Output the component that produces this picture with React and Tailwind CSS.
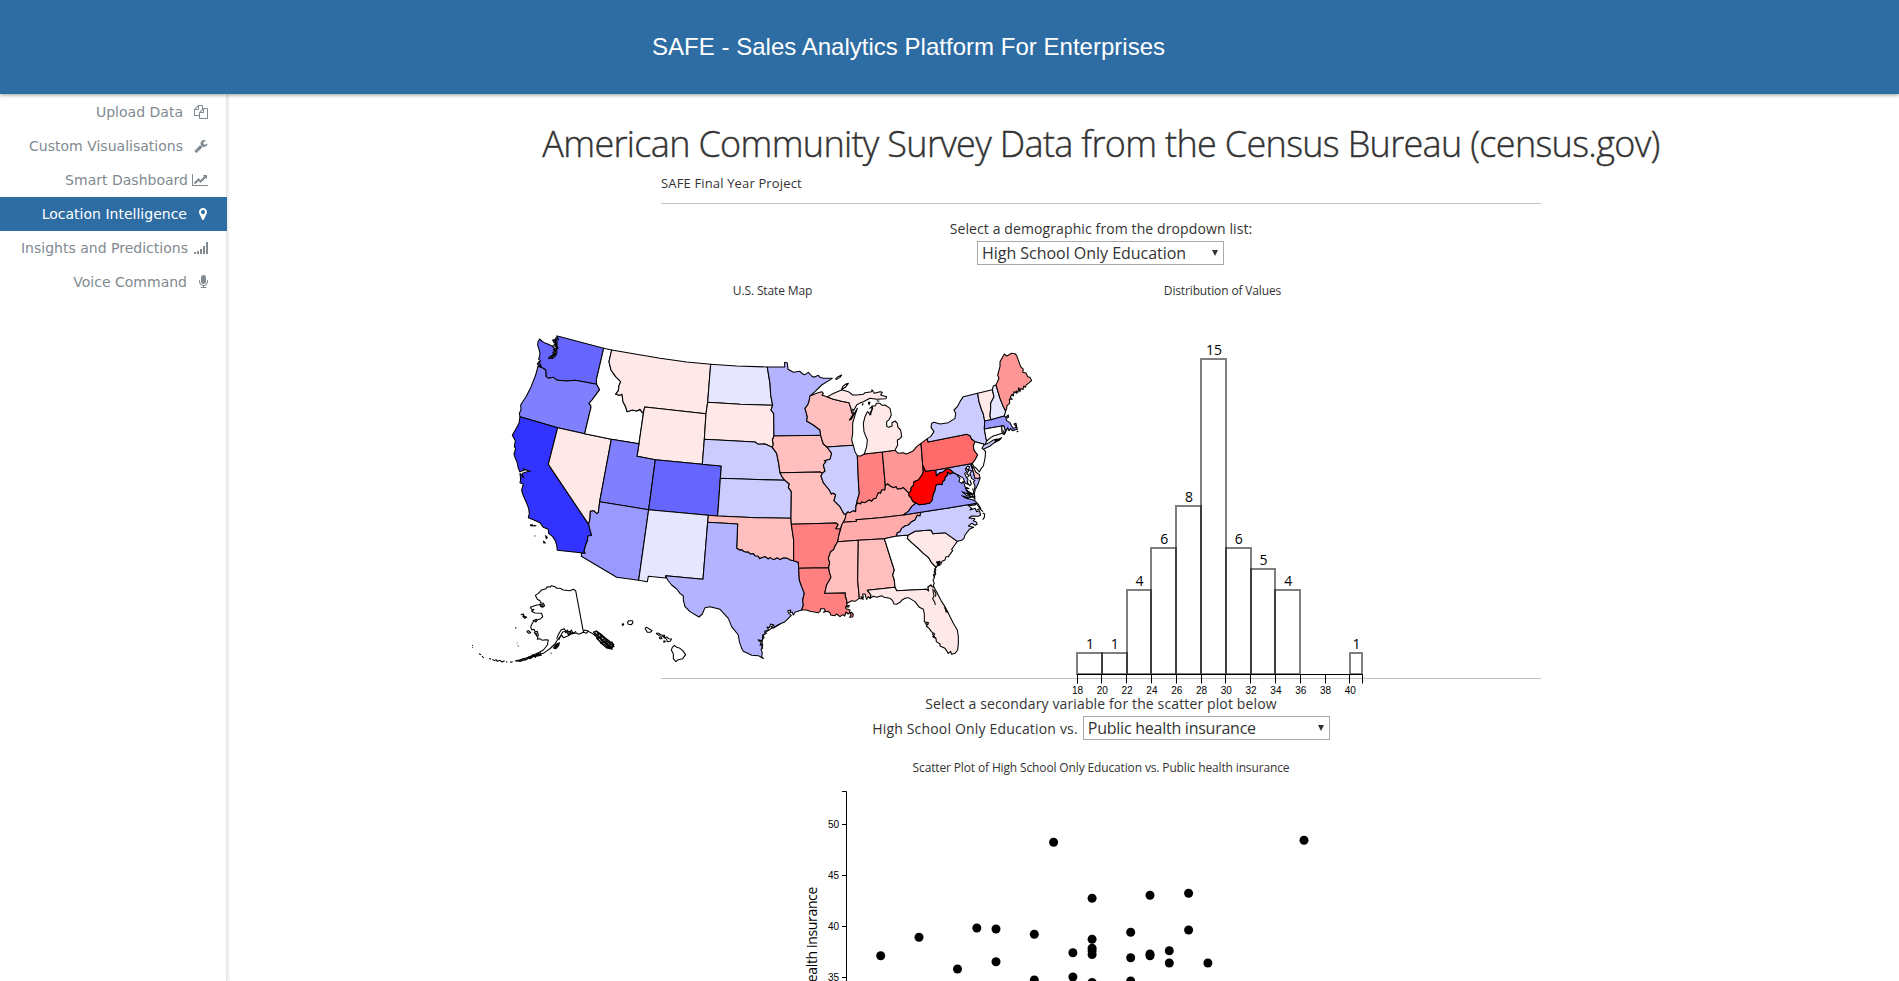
import React from 'react';

/* ---------- Sidebar ---------- */

const ICONS = {
  files: {
    box: '0 0 1792 1792',
    d: 'M1696 384q40 0 68 28t28 68v1216q0 40-28 68t-68 28h-960q-40 0-68-28t-28-68v-288h-544q-40 0-68-28t-28-68v-672q0-40 20-88t48-76l408-408q28-28 76-48t88-20h416q40 0 68 28t28 68v328q68-40 128-40h416zm-544 213l-299 299h299v-299zm-640-384l-299 299h299v-299zm196 647l316-316v-416h-384v416q0 40-28 68t-68 28h-416v640h512v-256q0-40 20-88t48-76zm956 804v-1152h-384v416q0 40-28 68t-68 28h-416v640h896z',
  },
  wrench: {
    box: '0 0 1792 1792',
    d: 'M448 1472q0-26-19-45t-45-19-45 19-19 45 19 45 45 19 45-19 19-45zm644-420l-682 682q-37 37-90 37-52 0-91-37l-106-108q-38-36-38-90 0-53 38-91l681-681q39 98 114.500 173.500t173.500 114.500zm634-435q0 39-23 106-47 134-164.500 217.500t-258.500 83.500q-185 0-316.500-131.500t-131.500-316.500 131.500-316.500 316.500-131.500q58 0 121.500 16.500t107.500 46.500q16 11 16 28t-16 28l-293 169v224l193 107q5-3 79-48.500t135.500-81 70.500-35.500q15 0 23.500 10t8.500 25z',
  },
  line: {
    box: '0 0 2048 1792',
    d: 'M2048 1536v128h-2048v-1536h128v1408h1920zm-128-1248v435q0 21-19.500 29.500t-35.500-7.500l-121-121-633 633q-10 10-23 10t-23-10l-233-233-416 416-192-192 585-585q10-10 23-10t23 10l233 233 464-464-121-121q-16-16-7.500-35.500t29.500-19.500h435q14 0 23 9t9 23z',
  },
  marker: {
    box: '384 0 1024 1792',
    d: 'M1152 640q0-106-75-181t-181-75-181 75-75 181 75 181 181 75 181-75 75-181zm256 0q0 109-33 179l-364 774q-16 33-47.500 52t-67.500 19-67.500-19-46.500-52l-365-774q-33-70-33-179 0-212 150-362t362-150 362 150 150 362z',
  },
  signal: {
    box: '0 0 1792 1792',
    d: 'M0 1408h256v256h-256zM384 1280h256v384h-256zM768 1024h256v640h-256zM1152 640h256v1024h-256zM1536 128h256v1536h-256z',
  },
  mic: {
    box: '320 0 1152 1792',
    d: 'M1472 704v128q0 221-147.500 384.500t-364.500 187.500v132h256q26 0 45 19t19 45-19 45-45 19h-640q-26 0-45-19t-19-45 19-45 45-19h256v-132q-217-24-364.500-187.500t-147.500-384.500v-128q0-26 19-45t45-19 45 19 19 45v128q0 185 131.500 316.500t316.500 131.500 316.500-131.500 131.500-316.500v-128q0-26 19-45t45-19 45 19 19 45zm-256-384v512q0 132-94 226t-226 94-226-94-94-226v-512q0-132 94-226t226-94 226 94 94 226z',
  },
};

const NAV = [
  { label: 'Upload Data', icon: 'files', w: 'w-[14px]', gap: 'gap-[11px]' },
  { label: 'Custom Visualisations', icon: 'wrench', w: 'w-[14px]', gap: 'gap-[11px]' },
  { label: 'Smart Dashboard', icon: 'line', w: 'w-[16px]', gap: 'gap-[4px]' },
  { label: 'Location Intelligence', icon: 'marker', w: 'w-[8px] mr-px', gap: 'gap-[12px]', active: true },
  { label: 'Insights and Predictions', icon: 'signal', w: 'w-[14px]', gap: 'gap-[6px]' },
  { label: 'Voice Command', icon: 'mic', w: 'w-[9px]', gap: 'gap-[12px]' },
];

function Sidebar() {
  return (
    <aside className="w-[227px] shrink-0 border-r border-[#e4e4e4] pt-px shadow-[1px_0_3px_rgba(0,0,0,0.12)]">
      <nav>
        {NAV.map((n) => (
          <a
            key={n.label}
            className={`flex h-[34px] items-center justify-end font-['DejaVu_Sans',sans-serif] text-[14px] ${n.gap} ${
              n.active ? '-mr-px bg-[#2e6da4] pr-[19px] text-white' : 'pr-[18px] text-[#818a91]'
            }`}
          >
            <span className="whitespace-nowrap tracking-[0.01px]">{n.label}</span>
            <svg viewBox={ICONS[n.icon].box} className={`h-[14px] ${n.w}`} fill="currentColor">
              <path d={ICONS[n.icon].d} />
            </svg>
          </a>
        ))}
      </nav>
    </aside>
  );
}

/* ---------- Map ---------- */

// Survey tiles: each tile has its own origin, borders are listed per tile.
const TILE = {
  B: [0, 0],
  C: [0, 450],
  D: [570, 60],
  E: [570, 510],
  F: [1080, 60],
  G: [1080, 510],
  H: [-120, 750],
};

// "B 1,2 3,4 C 5,6" -> [[x, y], ...]
function points(spec) {
  let o = TILE.B;
  const out = [];
  spec.trim().split(/\s+/).forEach((t) => {
    if (TILE[t]) o = TILE[t];
    else {
      const [x, y] = t.split(',').map(Number);
      out.push([x + o[0], y + o[1]]);
    }
  });
  return out;
}

const ARCS = {
  waCoast: 'B 114,139 122,137 112,133 116,126 122,122 116,118 118,110 120,100 117,88 113,76 114,66 119,57 125,63 133,68 145,73 157,79 160,76 159,82 164,84 160,90 166,92 158,97 162,102 154,108 147,112 146,116 154,113 158,115 168,105 171,96 169,88 175,84 168,80 171,74 163,74 169,68 161,66 158,60 166,62 168,53 176,60 170,48 175,49 311,85',
  waId: 'B 311,85 289,180 290,193',
  waOr: 'B 114,139 128,144 137,150 138,170 146,175 160,172 172,181 200,183 225,181 250,185 290,193',
  orId: 'B 290,193 299,209 290,221 276,240 267,250 272,256 273,263 269,278 254,341',
  orCoast: 'B 114,139 107,165 92,203 78,230 62,255 63,270 58,280 60,290',
  orCa: 'B 60,290 173,323',
  orNv: 'B 173,323 254,341',
  caCoast: 'B 60,290 57,310 46,330 37,346 46,362 43,380 47,385 42,402 45,412 51,426 55,445 59,455 75,450 70,446 85,452 92,453 78,456 68,460 66,470 72,472 60,460 C 60,10 62,30 60,38 70,42 65,60 68,72 78,95 86,115 88,130 85,143 100,149 120,158 130,172 145,178 146,190 158,200 166,212 170,225 172,241 256,250',
  caAz: 'C 256,250 252,243 257,225 263,210 263,199 275,196 270,180 266,163',
  caNv: 'C 266,163 B 145,433 173,323',
  nvAz: 'C 266,163 270,145 271,124 281,122 290,131 295,128 299,95',
  nvId: 'B 254,341 334,358',
  utId: 'B 334,358 417,371',
  nvUt: 'B 334,358 C 299,95',
  utAz: 'C 299,95 446,119',
  utWy: 'B 417,371 411,409 466,419',
  utCo: 'B 466,419 C 446,119',
  idN: 'B 311,85 335,90',
  idWy: 'B 417,371 431,275',
  idMt: 'B 335,90 327,125 333,150 347,170 362,185 357,197 355,212 347,223 358,226 366,223 369,245 377,260 381,275 397,270 410,273 420,268 427,278 431,275',
  mtWy: 'B 431,275 434,261 D 48,221',
  mtN: 'B 335,90 480,115 560,126 D 62,73',
  mtNd: 'D 62,73 53,187',
  mtSd: 'D 53,187 48,221',
  wySd: 'D 48,221 43,298',
  wyNe: 'D 43,298 37,373',
  wyCo: 'B 466,419 D 37,373',
  coNe: 'D 37,373 94,378 91,415',
  coKs: 'D 91,415 E 83,78',
  coOk: 'E 83,78 55,76',
  coNm: 'E 55,76 C 446,119',
  azNm: 'C 446,119 416,331',
  azMex: 'C 256,250 244,250 244,259 350,322 416,331',
  nmMex: 'C 416,331 442,335 445,319 497,324 497,317',
  nmOk: 'E 55,76 53,97',
  nmTx: 'E 53,97 39,268 C 497,317',
  ndN: 'D 62,73 140,78 232,81',
  ndMn: 'D 232,81 235,100 240,130 242,165 248,196',
  ndSd: 'D 53,187 150,193 248,196',
  sdMn: 'D 248,196 243,210 251,220 252,288',
  sdIa: 'D 252,288 247,300 250,312 247,322',
  sdNe: 'D 43,298 195,306 205,313 225,312 240,319 247,322',
  neIa: 'D 247,322 260,340 266,370 270,398',
  neMo: 'D 270,398 278,413 285,421',
  neKs: 'D 91,415 285,421',
  ksMo: 'D 285,421 298,432 295,442 304,455 E 303,85',
  ksOk: 'E 83,78 200,83 303,85',
  okMo: 'E 303,85 304,103',
  arMo: 'E 304,103 438,99 444,104 437,116 452,117',
  okAr: 'E 304,103 311,150 311,212',
  okTx: 'E 53,97 143,102 140,175 150,181 155,179 160,184 168,187 174,186 180,192 190,191 195,198 205,199 208,206 215,203 225,200 235,207 240,203 250,209 262,204 270,209 280,204 292,205 300,210 311,212',
  txAr: 'E 311,212 325,217 326,235',
  txLa: 'E 326,235 328,270 335,290 343,310 338,330 340,345 335,360',
  txCoast: 'E 335,360 315,367 310,375 306,366 300,368 302,360 293,362 296,370 304,376 285,395 270,402 250,414 243,410 252,405 242,402 238,413 231,411 236,420 224,424 229,430 219,436 222,442 215,452 205,449 207,453 214,456 210,466 218,462 217,475 213,478 217,488 215,500 220,506',
  txMex: 'E 220,506 205,497 185,496 160,484 155,475 148,455 145,435 125,410 115,385 90,358 60,350 45,353 37,372 27,381 0,365 -15,350 -20,330 -20,318 -30,310 -40,297 -55,285 C 503,330 497,317',
  arLa: 'E 326,235 416,233',
  arTn: 'E 452,117 447,135 443,155',
  arMs: 'E 443,155 437,165 430,180 422,185 415,205 419,218 416,233',
  laMs: 'E 416,233 418,245 423,262 410,285 404,310 466,308 466,318 470,330 471,340',
  moTn: 'E 452,117 455,105 460,97',
  moKy: 'E 460,97 466,85 468,72',
  moIl: 'E 468,72 D 462,522 450,500 432,482 437,465 430,459 424,462 418,450 400,428 393,408 397,400',
  moIa: 'D 270,398 390,396 397,400',
  ilIa: 'D 397,400 405,393 400,375 408,365 403,362 420,358 425,340 411,321',
  iaWi: 'D 411,321 400,312 396,300 392,286',
  iaMn: 'D 252,288 392,286',
  mnWi: 'D 392,286 390,270 370,255 350,243 352,230 345,205 353,195 357,185 360,168',
  mnN: 'D 232,81 284,81 284,67 292,69 294,88 310,97 330,94 338,102 345,104 355,97 365,108 372,112 385,106 390,112 400,115 427,115 395,135 375,155 360,168',
  wiSup: 'D 360,168 380,160 395,155 400,160 396,166 405,168 412,171',
  wiMi: 'D 412,171 430,178 455,184 477,188 483,205 485,218 490,220',
  wiLake: 'D 490,220 486,228 478,240 484,238 492,222 502,205 495,225 488,250 488,280 485,300 490,316',
  wiIl: 'D 411,321 490,316',
  ilLake: 'D 490,316 495,335 502,347',
  ilIn: 'D 502,347 506,440 508,460 502,480 498,498',
  inLake: 'D 502,347 512,348 523,342',
  inMi: 'D 523,342 577,336',
  ohMi: 'D 577,336 F 105,331',
  inOh: 'D 577,336 586,437',
  inKy: 'D 586,437 585,450 575,450 572,460 565,458 558,475 550,477 545,484 538,480 525,488 515,486 512,492 503,489 498,498',
  ilKy: 'D 498,498 497,515 E 490,62 480,68 474,66 468,72',
  ohKy: 'F 76,437 83,432 90,438 100,443 108,440 112,447 120,447 130,443 138,451 145,458',
  ohWv: 'F 145,458 152,455 154,442 160,437 162,425 175,420 186,405 190,395 188,375',
  ohPa: 'F 188,375 183,310',
  ohLake: 'F 105,331 115,340 130,338 138,342 145,340 160,332 170,320 183,310',
  paLake: 'F 183,310 202,296',
  paNy: 'F 202,296 204,306 320,283 330,287 335,297 345,305',
  nyN: 'F 202,296 212,290 222,275 213,262 215,250 222,247 240,252 265,248 285,235 287,220 282,210 292,200 300,185 310,170 353,160',
  nyVt: 'F 353,160 357,185 365,210 370,222 374,243',
  nyMa: 'F 374,243 373,267',
  nyCt: 'F 373,267 378,295 380,303',
  nyHarbor: 'F 380,303 375,315',
  njNy: 'F 345,305 370,312 375,315',
  njWest: 'F 345,305 340,318 342,330 353,345 345,360 337,370',
  njSea: 'F 337,370 340,378 349,385 358,396 364,385 370,378 375,355 377,335 369,326 375,315',
  vtN: 'F 353,160 397,149',
  vtNh: 'F 397,149 402,170 392,190 392,205 390,228 393,239',
  vtMa: 'F 374,243 393,239',
  nhMa: 'F 393,239 433,228',
  nhN: 'F 397,149 400,138 408,135',
  nhMe: 'F 408,135 420,175 430,200 437,213',
  nhSea: 'F 437,213 433,228',
  maine: 'F 408,135 417,115 413,105 420,80 420,65 433,42 440,48 455,40 465,41 470,47 482,80 490,88 488,97 498,99 503,110 510,112 515,122 505,130 498,136 496,142 491,138 489,149 483,145 480,155 476,143 474,157 468,153 470,160 462,155 460,168 456,163 451,172 457,178 448,177 449,190 441,197 440,206 437,213',
  maSea: 'F 433,228 437,232 445,225 446,231 438,236 440,242 450,248 455,258 460,265 470,262 465,255 462,252 468,250 470,260 472,268 458,272 452,266 447,272 443,263 437,275',
  maRi: 'F 437,275 431,257 425,258',
  maCt: 'F 425,258 373,267',
  ctRi: 'F 425,258 427,280',
  ctSea: 'F 427,280 410,285 400,288 392,293 380,303',
  riSea: 'F 427,280 432,284 431,272 434,282 437,275',
  paWv: 'F 188,375 197,394 227,390',
  paMd: 'F 227,390 332,371',
  paDe: 'F 332,371 337,370',
  wvMd: 'F 227,390 229,408 240,398 250,396 257,388 270,388 277,395',
  wvVa: 'F 277,398 270,402 262,396 262,405 255,412 254,420 248,425 246,434 238,432 228,435 225,450 219,465 216,482 208,490 195,492 178,494 168,489',
  wvKy: 'F 168,489 158,484 154,474 148,468 145,458',
  kyVa: 'F 168,489 155,500 G 145,64 130,75',
  vaTn: 'G 130,75 182,67',
  vaNc: 'G 182,67 270,53 350,40',
  vaSea: 'F 277,398 290,403 300,415 297,425 305,430 310,424 315,440 327,446 316,445 325,455 339,462 325,462 306,455 320,467 341,470 325,473 305,467 318,475 340,480 347,484 350,490',
  kyTn: 'E 460,97 500,94 498,89 G 60,83 130,75',
  tnNc: 'G 182,67 180,78 172,76 165,90 155,95 145,105 135,108 125,115 120,125 112,128 110,138',
  tnMs: 'E 443,155 505,151',
  tnAl: 'E 505,151 G 73,146',
  tnGa: 'G 73,146 110,138',
  gaNc: 'G 110,138 145,135',
  gaSc: 'G 145,135 142,145 155,158 175,175 190,190 205,202 215,218 228,232',
  scNc: 'G 145,135 165,124 210,120 215,123 218,131 255,128 292,154',
  scSea: 'G 228,232 234,225 230,216 240,214 236,224 243,222 246,214 255,210 258,200 265,200 278,182 275,178 282,168 292,154',
  ncSea: 'G 350,40 345,45 325,47 335,55 330,60 345,55 350,65 358,62 362,75 355,79 335,78 327,84 345,86 340,93 348,95 352,102 345,106 335,100 325,108 341,112 328,118 315,135 312,145 305,151 292,154',
  gaSea: 'G 228,232 224,240 227,250 220,254 224,262 219,270 223,280 220,286 222,292',
  gaFl: 'G 222,292 216,290 213,285 204,291 206,303 200,298 110,302 105,292',
  gaAl: 'G 105,292 103,270 98,255 103,240 98,225 73,146',
  alFl: 'G 105,292 22,301 33,315 30,325',
  flSea: 'G 30,325 40,319 50,322 65,317 72,322 90,325 98,332 102,342 110,343 120,337 125,331 135,325 145,323 165,335 178,352 190,358 193,372 193,395 206,398 199,408 208,416 214,425 224,432 219,440 228,445 229,455 240,462 240,468 255,475 265,490 272,484 275,493 285,490 293,480 295,460 295,440 292,420 280,400 265,370 255,350 245,335 232,310 222,292',
  msAl: 'E 505,151 503,270 508,325',
  alSea: 'E 508,325 520,328 513,320 520,323 518,312 525,312 530,328 535,320 540,325',
  msSea: 'E 471,340 485,332 495,334 508,325',
  laSea: 'E 335,360 350,360 360,364 385,368 390,365 392,356 402,356 406,362 400,367 413,364 420,368 422,375 435,377 440,372 450,380 458,374 464,378 468,366 475,372 480,368 483,375 479,382 488,381 490,373 485,367 478,368 480,360 468,356 466,350 476,351 478,346 470,347 471,340',
  miLow: 'D 523,342 530,320 532,300 522,275 520,250 F 15,230 22,215 26,218 30,225 38,205 36,198 45,198 50,190 60,190 66,196 75,195 90,205 94,225 88,238 80,245 80,258 86,262 96,258 96,248 105,243 112,250 114,262 122,270 125,290 117,298 112,300 113,315 105,331',
  miUp: 'D 412,171 425,163 440,156 455,150 458,140 466,133 475,130 466,142 454,149 465,152 475,155 488,165 500,165 520,163 525,158 545,155 546,149 553,160 570,155 577,157 572,165 590,170 588,176 560,178 540,175 520,185 508,190 500,195 492,210 488,208 490,220',
  mdEast: 'F 332,371 337,385 345,415 360,414',
  deSea: 'F 337,370 335,378 342,385 347,396 358,404 360,414',
  mdSea: 'F 360,414 355,430 348,445 343,450 345,438 340,425 345,422 335,415 330,400 335,392 325,390 329,380 322,378 316,388 321,395 314,400 318,410 324,418 322,428 327,434 316,430 310,415 303,410 290,403 277,395',
  liNy: 'F 366,325 372,315 388,308 400,300 412,297 405,303 425,293 420,299 400,310 390,318 370,328 366,325',
};

const ARC_POINTS = Object.fromEntries(Object.entries(ARCS).map(([k, v]) => [k, points(v)]));

const BLUSH = '#ffe8e8';
const ROSE = '#ffbfbf';
const STATES = [
  ['#6666ff', 'waCoast waId -waOr'],
  ['#8080ff', 'waOr orId -orNv -orCa -orCoast'],
  ['#3333ff', 'caCoast caAz caNv -orCa'],
  [BLUSH, 'orNv nvId nvUt -nvAz caNv'],
  ['#ffffff', 'idN idMt -idWy -utId -nvId -orId -waId'],
  [BLUSH, 'mtN mtNd mtSd -mtWy -idMt'],
  [BLUSH, 'mtWy wySd wyNe -wyCo -utWy idWy'],
  ['#8080ff', 'utId utWy utCo -utAz -nvUt'],
  ['#9999ff', 'utAz azNm -azMex caAz nvAz'],
  ['#6666ff', 'wyCo coNe coKs coOk coNm -utCo'],
  ['#e6e6ff', '-coNm nmOk nmTx -nmMex -azNm'],
  ['#e6e6ff', 'ndN ndMn -ndSd -mtNd'],
  [BLUSH, 'ndSd sdMn sdIa -sdNe -wySd -mtSd'],
  ['#ccccff', 'sdNe neIa neMo -neKs -coNe -wyNe'],
  ['#ccccff', 'neKs ksMo -ksOk -coKs'],
  [ROSE, '-coOk ksOk okMo okAr -okTx -nmOk'],
  ['#b3b3ff', 'okTx txAr txLa txCoast txMex -nmTx'],
  ['#b3b3ff', 'mnN -mnWi -iaMn -sdMn -ndMn'],
  [ROSE, 'iaMn -iaWi -ilIa -moIa -neIa -sdIa'],
  [ROSE, 'moIa -moIl -moKy -moTn -arMo -okMo -ksMo -neMo'],
  ['#ff8080', 'arMo arTn arMs -arLa -txAr -okAr'],
  ['#ff8080', 'arLa laMs -laSea -txLa'],
  [ROSE, 'wiSup wiMi wiLake -wiIl iaWi mnWi'],
  ['#ccccff', 'wiIl ilLake ilIn ilKy moIl ilIa'],
  ['#ff8080', 'inLake inMi inOh inKy -ilIn'],
  ['#ff9696', 'ohMi ohLake -ohPa -ohWv -ohKy -inOh'],
  ['#ffabab', 'ohKy -wvKy kyVa -kyTn moKy -ilKy -inKy'],
  ['#ffabab', 'kyTn vaTn tnNc -tnGa -tnAl -tnMs -arTn moTn'],
  [ROSE, 'tnMs msAl -msSea -laMs -arMs'],
  [ROSE, 'tnAl -gaAl alFl -alSea -msAl'],
  ['#ffffff', 'tnGa gaNc gaSc gaSea gaFl gaAl'],
  [BLUSH, '-alFl -gaFl -flSea'],
  [BLUSH, 'scNc -scSea -gaSc'],
  ['#ccccff', 'vaNc ncSea -scNc -gaNc -tnNc'],
  ['#9999ff', 'vaSea -vaNc -vaTn -kyVa -wvVa'],
  ['#b3b3ff', 'paMd mdEast mdSea -wvMd'],
  ['#ffbfbf', 'paDe deSea -mdEast'],
  ['#ff0000', 'paWv wvMd wvVa wvKy ohWv'],
  ['#ff6b6b', 'paLake paNy njWest -paDe -paMd -paWv -ohPa'],
  ['#ccccff', 'nyN nyVt nyMa nyCt nyHarbor -njNy -paNy'],
  ['#ffffff', 'njNy -njSea -njWest'],
  ['#ccccff', 'liNy'],
  [BLUSH, 'vtN vtNh -vtMa -nyVt'],
  ['#e6e6ff', 'nhN nhMe nhSea -nhMa -vtNh'],
  ['#ff9696', 'maine -nhMe'],
  ['#9999ff', 'nhMa maSea maRi maCt -nyMa vtMa'],
  ['#ffffff', '-maCt ctRi ctSea -nyCt'],
  ['#ffffff', '-maRi -riSea -ctRi'],
  [BLUSH, 'miLow -ohMi -inMi'],
  [BLUSH, 'miUp -wiMi'],
];

function ringPath(list) {
  const pts = [];
  list.split(' ').forEach((name) => {
    const arc = name[0] === '-' ? [...ARC_POINTS[name.slice(1)]].reverse() : ARC_POINTS[name];
    pts.push(...arc);
  });
  return `M${pts.map((p) => p.join(',')).join('L')}Z`;
}

const linePath = (spec) => `M${points(spec).map((p) => p.join(',')).join('L')}`;

// Islands and coast details, outlines only
const OUTLINES = [
  // Puget Sound
  'B 160,58 170,62 162,68 172,72 164,78 172,82 163,88 170,92 160,100 168,102 152,110 158,114 146,115',
  'B 166,56 172,66 166,74 172,80 166,90 168,100 156,112',
  'B 114,139 118,136 124,140 118,126 114,130',
  // Alaska
  'H 370,185 347,62 340,58 330,62 310,60 300,55 290,55 285,50 275,47 270,51 262,50 258,56 245,60 235,70 226,76 232,88 240,92 242,98 250,100 254,107 248,112 240,108 243,102 236,104 228,106 211,112 216,120 222,118 215,124 225,129 245,130 248,140 242,146 232,150 228,156 222,152 215,163 212,172 216,180 222,178 226,186 232,184 235,195 232,208 240,206 247,211 257,209 265,210 262,225 250,240 235,248 225,253 205,262 190,266 170,273 182,274 200,268 215,262 230,256 250,250 262,242 272,234 285,222 292,210 300,200 305,196 310,203 325,197 335,190 350,189 356,193 370,187 380,190 384,182 374,180 370,185',
  'H 290,206 294,196 303,180 312,176 318,184 308,186 302,198 296,210',
  'H 316,190 322,180 328,192 334,180 338,188 326,196 320,186 330,184 336,192 348,184',
  'H 240,104 250,104 244,110 252,109',
  'H 384,184 396,190 408,198 400,186 410,184 416,196 404,196 414,204 424,196 418,190 426,202 410,206 422,214 434,206 428,200 440,214 422,220 436,226 446,216 438,210 452,224 438,230 450,236 460,228 448,220 456,216 462,230 446,232 430,222 418,212 408,200',
  'H 406,190 420,206 434,218 446,230 456,236 458,224 442,212 426,196 412,188',
  'H 412,194 424,210 440,222 452,232',
  'H 408,182 422,192 436,204 450,214 462,224 454,230 440,218 428,208 414,198 404,190 408,182',
  'H 410,204 424,220 440,234 458,238',
  'H 420,200 430,216 444,226',
  'H 282,230 290,222 298,218 296,228 288,236 280,234 292,226 286,234 298,222 284,228 292,232',
  'H 182,134 190,132 192,138 200,142 194,145 188,138 196,140',
  'H 200,184 206,182 212,188 206,190 200,184',
  'H 166,172 169,175',
  'H 171,218 172,220',
  'H 174,226 175,229',
  'H 37,225 38,227',
  'H 38,232 38,234',
  'H 57,251 63,254',
  'H 66,258 71,264',
  'H 88,265 93,268',
  'H 97,268 103,272 108,269 112,274 120,271 126,276 134,272',
  'H 138,276 142,275',
  'H 150,277 158,275',
  'H 165,274 172,271 180,273 190,266 196,270 205,262 214,264 222,256 235,258 228,252 242,254 240,246',
  'H 204,260 212,266 218,254 226,262 234,250 244,256 228,258 216,258 208,264',
  'H 218,152 230,148 226,156',
  'H 222,186 232,200 228,188',
  'H 272,250 275,249',
  // Hawaii
  'H 486,163 490,161 491,165 487,166 486,163',
  'H 502,157 507,152 517,152 519,158 514,164 505,163 502,157',
  'H 555,175 560,172 568,177 576,182 571,187 562,187 555,175',
  'H 588,190 596,190 604,195 596,196 588,190',
  'H 598,201 604,200 606,206 599,206 598,201',
  'H 606,196 614,196 612,202 606,196',
  'H 612,203 620,201 626,206 635,207 630,214 622,215 620,208 612,203',
  'H 611,212 616,214 612,217 611,212',
  'H 637,232 643,226 650,232 660,235 668,242 677,254 668,266 655,269 648,275 640,266 640,252 634,240 637,232',
  // California channel islands
  'C 90,165 97,164 100,168 92,167 90,165',
  'C 101,166 108,167 103,168',
  'C 104,197 106,199',
  'C 136,196 142,203 139,206 137,198',
  'C 130,213 136,219 132,219 130,213',
  // Great Lakes
  'D 436,118 444,110 455,105 450,112 440,118 436,118',
  'D 535,186 540,187 537,194 535,186',
  'D 538,206 546,200 545,212 540,218 544,224',
  'D 560,182 568,184',
  'D 520,190 516,196',
  // Atlantic
  'F 455,272 462,270',
  'F 470,276 475,273',
  'F 318,384 326,392 320,402 328,406 322,412',
  'F 330,420 334,432 328,438',
  'F 338,445 345,470 340,458',
  'F 318,450 332,460 322,458',
  'G 350,42 362,58 368,64 358,55',
  'G 368,69 374,72 373,82 368,89',
  'G 320,5 338,13 322,14 340,22',
  'G 346,0 342,12 345,28 336,15',
  'G 352,38 362,55 350,60',
  'G 218,296 222,318 218,326 224,336 226,345',
  'G 222,300 228,312 226,320',
  'G 252,352 264,366 258,366 256,356',
  'G 229,216 242,218 232,222 240,226 230,228',
  'G 222,236 228,240 222,246 227,252 221,262',
  'G 216,430 226,444 218,438',
  'G 194,398 204,404 196,402',
  'E 219,432 216,460 216,478',
  'E 222,430 240,418 270,402',
];

function UsMap() {
  return (
    <svg className="h-[360px] w-[580px] overflow-visible" viewBox="460 320 580 360">
      <g transform="translate(500 320) scale(0.33333)" stroke="#000" strokeWidth="3.2" strokeLinejoin="round">
        {STATES.map(([fill, ring]) => (
          <path key={ring} d={ringPath(ring)} fill={fill} />
        ))}
        {OUTLINES.map((o) => (
          <path key={o} d={linePath(o)} fill="none" />
        ))}
      </g>
    </svg>
  );
}

/* ---------- Histogram ---------- */

const BINS = [
  [18, 20, 1],
  [20, 22, 1],
  [22, 24, 4],
  [24, 26, 6],
  [26, 28, 8],
  [28, 30, 15],
  [30, 32, 6],
  [32, 34, 5],
  [34, 36, 4],
  [40, 41, 1],
];
const hx = (v) => 1077 + (v - 18) * 12.4;

function Histogram() {
  return (
    <svg className="h-[360px] w-[340px] overflow-visible" viewBox="1040 330 340 360">
      {BINS.map(([a, b, n]) => (
        <g key={a}>
          <rect
            x={Math.round(hx(a))}
            y={674 - n * 21}
            width={Math.round(hx(b)) - Math.round(hx(a))}
            height={n * 21}
            fill="none"
            stroke="#000"
            strokeOpacity="0.5"
            strokeWidth="2"
          />
          <text
            x={(hx(a) + hx(b)) / 2 + 0.5}
            y={669.5 - n * 21}
            textAnchor="middle"
            className="fill-black font-['Open_Sans',sans-serif] text-[14px]"
          >
            {n}
          </text>
        </g>
      ))}
      <path d="M1077.5 683.5V674.500H1362.500V683.500" fill="none" stroke="#000" />
      {[18, 20, 22, 24, 26, 28, 30, 32, 34, 36, 38, 40].map((t) => (
        <g key={t}>
          <path d={`M${Math.floor(hx(t)) + 0.5} 674V683.500`} stroke="#000" />
          <text
            x={hx(t) + 0.5}
            y="694"
            textAnchor="middle"
            className="fill-black font-['Liberation_Sans',sans-serif] text-[10px]"
          >
            {t}
          </text>
        </g>
      ))}
    </svg>
  );
}

/* ---------- Scatter plot ---------- */

const DOTS = [
  [880.7, 955.7], [919, 937.3], [957.5, 969], [976.8, 928], [996, 929], [996, 961.7], [1034.3, 934.3],
  [1034.3, 980], [1053.6, 842.3], [1072.9, 952.7], [1072.9, 977], [1092.1, 898.3], [1092.1, 939.3],
  [1092.1, 948.3], [1092.1, 951], [1092.1, 954.6], [1092.1, 982.5], [1130.7, 932.3], [1130.7, 957.7],
  [1130.7, 981], [1150, 895.3], [1150, 954], [1150, 955.7], [1169.3, 950.7], [1169.3, 963],
  [1188.6, 893.3], [1188.6, 930], [1207.9, 963], [1304, 840.3],
];

function Scatter() {
  return (
    <svg className="h-[200px] w-[600px] overflow-visible" viewBox="800 781 600 200">
      <path d="M842 791.500H846.500V1000" fill="none" stroke="#000" />
      {[[50, 824.5], [45, 875.5], [40, 926.5], [35, 977.5]].map(([v, y]) => (
        <g key={v}>
          <path d={`M842 ${y}H847`} stroke="#000" />
          <text
            x="839"
            y={y + 3.5}
            textAnchor="end"
            className="fill-black font-['Liberation_Sans',sans-serif] text-[10px]"
          >
            {v}
          </text>
        </g>
      ))}
      <text
        transform="translate(816.500 887) rotate(-90)"
        textAnchor="end"
        className="fill-black font-['Open_Sans',sans-serif] text-[14px] tracking-[-0.35px]"
      >
        Public health insurance
      </text>
      {DOTS.map(([x, y]) => (
        <circle key={`${x}-${y}`} cx={x} cy={y} r="4.5" />
      ))}
    </svg>
  );
}

/* ---------- Page ---------- */

function Select({ children, tracking }) {
  return (
    <div
      className={`flex h-6 w-[247px] items-center justify-between border border-[#a9a9a9] bg-white pr-[5px] pl-1 text-left text-[16px] leading-none ${tracking}`}
    >
      <span className="whitespace-nowrap">{children}</span>
      <svg viewBox="0 0 6 6" className="size-[6px]" fill="#333">
        <path d="M0 0h6L3 6z" />
      </svg>
    </div>
  );
}

export default function App() {
  return (
    <div className="flex h-screen flex-col overflow-hidden bg-white">
      <header className="z-10 flex h-[94px] shrink-0 bg-[#2e6da4] pt-[32px] pl-[652px] font-['Liberation_Sans',sans-serif] text-[24px] leading-[30px] tracking-[0.02px] whitespace-nowrap text-white shadow-[0_1px_4px_rgba(0,0,0,0.4)]">
        SAFE - Sales Analytics Platform For Enterprises
      </header>
      <div className="flex min-h-0 flex-1">
        <Sidebar />
        <main className="min-w-0 flex-1 font-['Open_Sans',sans-serif] text-[#333]">
          <div className="ml-[434px] w-[880px]">
            <h1 className="-mx-[200px] pt-[25px] text-center text-[36px] leading-[50px] font-light tracking-[-0.67px] whitespace-nowrap [-webkit-text-stroke:0.4px_#333]">
              American Community Survey Data from the Census Bureau (census.gov)
            </h1>
            <p className="mt-[4px] text-[13px] leading-5 tracking-[0.15px]">SAFE Final Year Project</p>
            <hr className="mt-[10px] border-[#c0c0c0]" />
            <div className="mt-[15px] flex flex-col items-center">
              <p className="text-[14px] leading-[20px] tracking-[0.11px]">Select a demographic from the dropdown list:</p>
              <div className="mt-[2px] pr-px">
                <Select tracking="tracking-[-0.03px]">High School Only Education</Select>
              </div>
            </div>
          </div>
          <div className="ml-[233px] flex h-[413px] text-[12px] tracking-[-0.14px]">
            <section className="w-[580px]">
              <h2 className="mr-[45px] ml-[45px] w-[535px] pt-[16px] text-center leading-[20px]">U.S. State Map</h2>
              <div className="mt-[19px]">
                <UsMap />
              </div>
            </section>
            <section className="w-[340px] tracking-normal">
              <h2 className="pt-[16px] pl-[25px] text-center leading-[20px] tracking-[-0.14px]">Distribution of Values</h2>
              <div className="mt-[29px]">
                <Histogram />
              </div>
            </section>
          </div>
          <div className="ml-[434px] w-[880px]">
            <hr className="border-[#c0c0c0]" />
            <div className="mt-[15px] flex flex-col items-center">
              <p className="text-[14px] leading-[20px] tracking-[0.13px]">
                Select a secondary variable for the scatter plot below
              </p>
              <div className="mt-[2px] flex items-center gap-[5px]">
                <span className="text-[14px] tracking-[0.18px] whitespace-nowrap">High School Only Education vs.</span>
                <Select tracking="tracking-[-0.25px]">Public health insurance</Select>
              </div>
              <h2 className="mt-[18px] text-[12px] leading-[20px] tracking-[-0.14px]">
                Scatter Plot of High School Only Education vs. Public health insurance
              </h2>
            </div>
          </div>
          <div className="mt-[3px] ml-[573px]">
            <Scatter />
          </div>
        </main>
      </div>
    </div>
  );
}
